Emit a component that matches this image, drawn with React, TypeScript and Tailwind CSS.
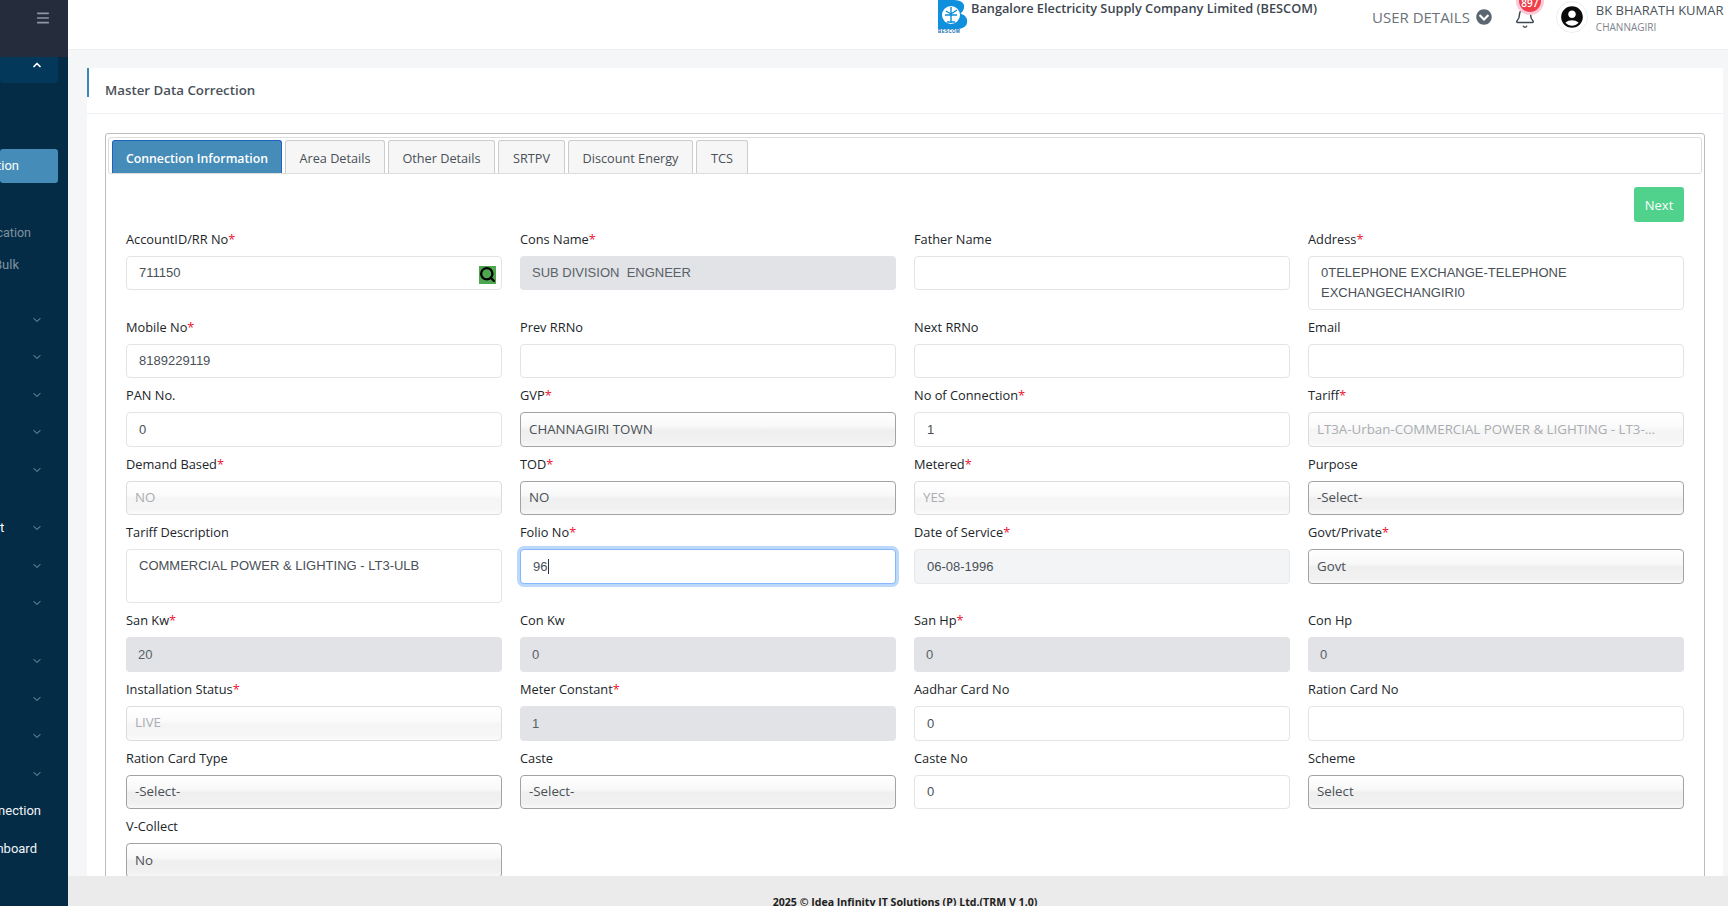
import { ChevronDown, ChevronUp, Menu, Bell, Search } from "lucide-react";
import { FaChevronCircleDown } from "react-icons/fa";
import { MdAccountCircle } from "react-icons/md";

type Kind = "text" | "gray" | "light" | "select" | "muted" | "focus";

interface Field {
  label: string;
  value?: string;
  kind: Kind;
  required?: boolean;
  tall?: boolean;
  search?: boolean;
}

const fields: Field[] = [
  { label: "AccountID/RR No", value: "711150", kind: "text", required: true, search: true },
  { label: "Cons Name", value: "SUB DIVISION  ENGNEER", kind: "gray", required: true },
  { label: "Father Name", kind: "text" },
  { label: "Address", value: "0TELEPHONE EXCHANGE-TELEPHONE EXCHANGECHANGIRI0", kind: "text", required: true, tall: true },
  { label: "Mobile No", value: "8189229119", kind: "text", required: true },
  { label: "Prev RRNo", kind: "text" },
  { label: "Next RRNo", kind: "text" },
  { label: "Email", kind: "text" },
  { label: "PAN No.", value: "0", kind: "text" },
  { label: "GVP", value: "CHANNAGIRI TOWN", kind: "select", required: true },
  { label: "No of Connection", value: "1", kind: "text", required: true },
  { label: "Tariff", value: "LT3A-Urban-COMMERCIAL POWER & LIGHTING - LT3-ULB", kind: "muted", required: true },
  { label: "Demand Based", value: "NO", kind: "muted", required: true },
  { label: "TOD", value: "NO", kind: "select", required: true },
  { label: "Metered", value: "YES", kind: "muted", required: true },
  { label: "Purpose", value: "-Select-", kind: "select" },
  { label: "Tariff Description", value: "COMMERCIAL POWER & LIGHTING - LT3-ULB", kind: "text", tall: true },
  { label: "Folio No", value: "96", kind: "focus", required: true },
  { label: "Date of Service", value: "06-08-1996", kind: "light", required: true },
  { label: "Govt/Private", value: "Govt", kind: "select", required: true },
  { label: "San Kw", value: "20", kind: "gray", required: true },
  { label: "Con Kw", value: "0", kind: "gray" },
  { label: "San Hp", value: "0", kind: "gray", required: true },
  { label: "Con Hp", value: "0", kind: "gray" },
  { label: "Installation Status", value: "LIVE", kind: "muted", required: true },
  { label: "Meter Constant", value: "1", kind: "gray", required: true },
  { label: "Aadhar Card No", value: "0", kind: "text" },
  { label: "Ration Card No", kind: "text" },
  { label: "Ration Card Type", value: "-Select-", kind: "select" },
  { label: "Caste", value: "-Select-", kind: "select" },
  { label: "Caste No", value: "0", kind: "text" },
  { label: "Scheme", value: "Select", kind: "select" },
  { label: "V-Collect", value: "No", kind: "select" },
];

const tabs = [
  { name: "Area Details", width: "w-[100px]" },
  { name: "Other Details", width: "w-[107px]" },
  { name: "SRTPV", width: "w-[67px]" },
  { name: "Discount Energy", width: "w-[125px]" },
  { name: "TCS", width: "w-[52px]" },
];

const boxClass: Record<Kind, string> = {
  text: "border border-[#e2e4e7] bg-white text-[#495057] pl-[12px] font-['Liberation_Sans',sans-serif] text-[13px]",
  gray: "bg-[#e1e3e6] text-[#5a6168] pl-[12px] font-['Liberation_Sans',sans-serif] text-[13px]",
  light: "border border-[#e8e9eb] bg-[#f3f4f6] text-[#495057] pl-[12px] font-['Liberation_Sans',sans-serif] text-[13px]",
  select:
    "border border-[#a3a3a3] bg-[linear-gradient(180deg,#ffffff_0%,#f8f8f8_42%,#efefef_52%,#f1f1f1_85%,#f8f8f8_100%)] text-[#495057] pl-[8px] font-['Open_Sans',sans-serif] text-[13.3px]",
  muted:
    "border border-[#dcdcdc] bg-[linear-gradient(180deg,#ffffff_0%,#fbfbfb_42%,#f5f5f5_52%,#f6f6f6_85%,#fbfbfb_100%)] text-[#a9adb1] pl-[8px] pr-[7px] font-['Open_Sans',sans-serif] text-[13.3px]",
  focus:
    "border border-[#86b7fe] bg-white text-[#495057] pl-[12px] shadow-[0_0_0_3px_#bcd8fb] font-['Liberation_Sans',sans-serif] text-[13px]",
};

function FormField({ field }: { field: Field }) {
  return (
    <div>
      <div className="mb-[8.5px] h-[15.5px] text-[12.8px] font-medium leading-[15px] text-[#212529] font-['Open_Sans',sans-serif]">
        {field.label}
        {field.required && <span className="text-[#f0142f]">*</span>}
      </div>
      <div
        className={`relative rounded-[4px] ${boxClass[field.kind]} ${
          field.tall ? "h-[54px] pb-[5px] pt-[6px] leading-[20px]" : "flex h-[34.67px] items-center"
        }`}
      >
        <span className={field.tall ? "block pr-[60px]" : "block truncate whitespace-pre pr-[12px]"}>
          {field.value}
          {field.kind === "focus" && <span className="ml-px inline-block h-[15px] w-px bg-[#333] align-text-bottom" />}
        </span>
        {field.search && (
          <span className="absolute right-[5px] top-[9px] flex h-[18px] w-[17px] items-center justify-center bg-[#4ea64e]">
            <Search size={17} strokeWidth={3.2} color="#000" />
          </span>
        )}
      </div>
    </div>
  );
}

function SideChevron() {
  return (
    <div className="flex h-[37.5px] items-center justify-end pr-[25px]">
      <ChevronDown size={12} strokeWidth={2} className="text-[#8ba3b3]" />
    </div>
  );
}

function SideText({ text, className }: { text: string; className: string }) {
  return (
    <div className={`flex items-center justify-end overflow-hidden whitespace-nowrap ${className}`}>
      <span>{text}</span>
    </div>
  );
}

export default function App() {
  return (
    <div className="flex h-screen overflow-hidden bg-[#f5f6f8] font-['Open_Sans',sans-serif]">
      {/* sidebar */}
      <aside className="w-[68px] shrink-0 bg-[#052c47] text-[13px] font-['Roboto',sans-serif]">
        <div className="flex h-[57px] justify-end bg-[#252c3b] pr-[17px] pt-[10px]">
          <Menu size={16} strokeWidth={2.4} className="text-[#8f96a3]" />
        </div>
        <div className="mr-[10px] flex h-[26px] justify-end rounded-b-[3px] bg-[#04385a] pr-[15px]">
          <ChevronUp size={12} strokeWidth={3.5} className="mt-[2px] text-white" />
        </div>
        <div className="mr-[10px] mt-[66px] flex h-[34px] items-center justify-end overflow-hidden rounded-[3px] bg-[#458cb8] pr-[39px] text-white">
          <span className="whitespace-nowrap">tion</span>
        </div>
        <SideText text="cation" className="mt-[34px] h-[32px] w-[31px] text-[12.5px] text-[#7f93a1]" />
        <SideText text="Bulk" className="h-[32px] w-[19px] text-[#7f93a1]" />
        <div className="mt-[20px]">
          <SideChevron />
          <SideChevron />
          <SideChevron />
          <SideChevron />
          <SideChevron />
        </div>
        <div className="relative mt-[20.75px]">
          <SideChevron />
          <span className="absolute left-0 top-[9px] text-white">t</span>
          <SideChevron />
          <SideChevron />
        </div>
        <div className="mt-[20.5px]">
          <SideChevron />
          <SideChevron />
          <SideChevron />
          <SideChevron />
        </div>
        <SideText text="nection" className="h-[37.5px] w-[41px] text-[#f1f5f8]" />
        <SideText text="nboard" className="h-[37.5px] w-[37px] text-[#f1f5f8]" />
      </aside>

      <div className="flex min-w-0 flex-1 flex-col">
        {/* top bar */}
        <header className="flex h-[50px] shrink-0 items-start border-b border-[#eceef0] bg-white pl-[870px]">
          <svg width="30" height="33" viewBox="0 0 30 33" className="shrink-0">
            <path d="M0 0h16c8 0 11 4 10 8-.5 2.5-2 4.5-3.500 5.500C27 15 30 18 29 23c-1 4-5 6-11 6H0z" fill="#0f8fdc" />
            <circle cx="13" cy="15" r="9" fill="#fff" />
            <path d="M13 7v16M8 11l5 3 6-4M7 15h12M9 22h8" stroke="#0f8fdc" strokeWidth="1.4" fill="none" />
            <text x="0" y="33" fontSize="4.500" fontWeight="700" fill="#0f6fb0" fontFamily="Liberation Sans, sans-serif" letterSpacing="0.4">
              BESCOM
            </text>
          </svg>
          <div className="ml-[3px] w-[346px] whitespace-nowrap text-[12.75px] font-semibold leading-[16px] text-[#3d4650]">
            Bangalore Electricity Supply Company Limited (BESCOM)
          </div>
          <div className="ml-[55px] mt-[7px] whitespace-nowrap text-[15px] leading-[20px] text-[#6b7278]">USER DETAILS</div>
          <FaChevronCircleDown size={16} className="ml-[6px] mt-[9px] shrink-0 text-[#5b6670]" />
          <div className="relative ml-[22px] mt-[7px] shrink-0">
            <Bell size={22} strokeWidth={1.6} className="text-[#3f4854]" />
            <span className="absolute left-[5px] top-[-17px] flex h-[22px] w-[22px] items-center justify-center overflow-hidden rounded-full bg-[#ef3f4a] pt-[4px] text-[10px] font-semibold leading-none text-white shadow-[0_0_0_3px_#fbc9d8]">
              897
            </span>
          </div>
          <div className="ml-[20px] mt-[1px] flex h-[32px] w-[32px] shrink-0 items-center justify-center rounded-full border border-[#eeeeee]">
            <MdAccountCircle size={26} className="text-[#0a0a0a]" />
          </div>
          <div className="ml-[8px] whitespace-nowrap">
            <div className="pt-[2px] text-[13px] font-medium leading-[17px] text-[#4a525a]">BK BHARATH KUMAR</div>
            <div className="text-[10px] leading-[16px] text-[#7c848c]">CHANNAGIRI</div>
          </div>
        </header>

        {/* page */}
        <main className="min-h-0 flex-1 overflow-hidden pl-[19px] pr-[5px] pt-[18px]">
          <div className="relative bg-white">
            <span className="absolute left-0 top-0 h-[29px] w-[2px] bg-[#3d86b8]" />
            <div className="flex h-[46px] items-center border-b border-[#eef0f2] pl-[18px] text-[13.3px] font-semibold text-[#4a5159]">
              <span>Master Data Correction</span>
            </div>
            <div className="mx-[18px] mt-[19px] rounded-t-[3px] border border-[#bdbdbd] pb-[40px]">
              <div className="mx-[2px] mt-[3px] flex h-[37px] items-end gap-[3px] rounded-[3px] border border-[#dddddd] pl-[3px]">
                <div className="flex h-[33px] w-[170px] items-center justify-center rounded-t-[3px] border border-b-0 border-[#1d63c4] bg-[#458cb8] pt-[4px] text-[12.3px] font-semibold text-white">
                  Connection Information
                </div>
                {tabs.map((t) => (
                  <div
                    key={t.name}
                    className={`flex h-[33px] items-center justify-center rounded-t-[3px] border border-b-0 border-[#cccccc] bg-[#f6f6f6] pt-[4px] text-[12.7px] font-medium text-[#495057] ${t.width}`}
                  >
                    {t.name}
                  </div>
                ))}
              </div>
              <div className="mt-[13px] flex justify-end pr-[20px]">
                <div className="flex h-[35px] w-[50px] items-center justify-center rounded-[3px] bg-[#50d28c] pt-[3px] text-[13px] text-white">
                  Next
                </div>
              </div>
              <div className="mt-[9.5px] grid grid-cols-4 gap-x-[18px] gap-y-[10px] px-[20px]">
                {fields.map((f) => (
                  <FormField key={f.label} field={f} />
                ))}
              </div>
            </div>
          </div>
        </main>

        <footer className="h-[30px] shrink-0 bg-[#ebebeb] pl-[14px] pt-[19px] text-center text-[10.6px] font-bold leading-[14px] text-[#222222]">
          2025 © Idea Infinity IT Solutions (P) Ltd.(TRM V 1.0)
        </footer>
      </div>
    </div>
  );
}
